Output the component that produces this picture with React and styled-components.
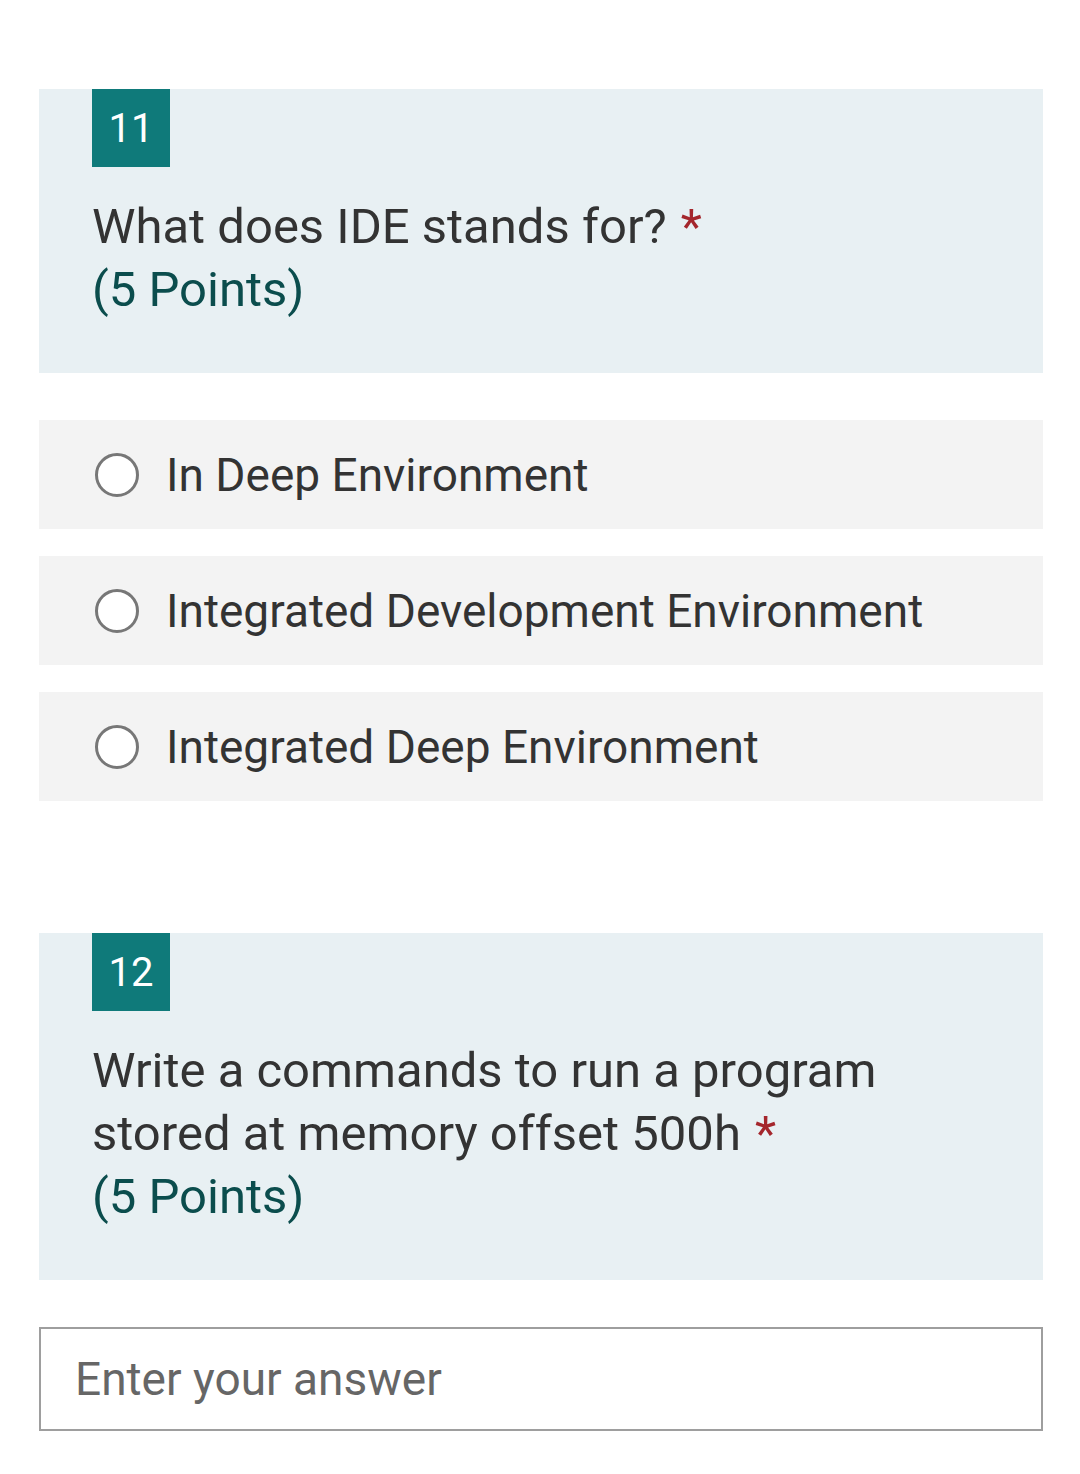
import styled, { createGlobalStyle } from 'styled-components';

const Global = createGlobalStyle`
  body{margin:0;background:#fff;font-family:Roboto,"Noto Sans",sans-serif;}
`;

const Page = styled.div`
  padding:89px 37px 40px 39px;
  display:flex;flex-direction:column;
`;

const QuestionBox = styled.div`
  background:#e8f0f3;
  padding:0 40px 52px 53px;
  margin-top:${p=>p.$top||0}px;
`;
const Badge = styled.div`
  width:78px;height:78px;background:#0f7a7a;color:#fff;
  display:flex;align-items:center;justify-content:center;
  font-size:40px;
`;
const QText = styled.div`
  margin-top:28px;font-size:49px;line-height:63px;color:#333;
`;
const Star = styled.span`
  color:#a4262c;margin-left:14px;
`;
const Points = styled.div`
  color:#0b4d4d;
`;

const Options = styled.div`
  display:flex;flex-direction:column;gap:27px;margin-top:47px;
`;
const Option = styled.label`
  height:109px;background:#f3f3f3;
  display:flex;align-items:center;padding-left:56px;
  font-size:46px;color:#333;
`;
const Radio = styled.span`
  width:38px;height:38px;border:3px solid #777;border-radius:50%;
  background:#fff;margin-right:27px;flex-shrink:0;
`;

const Input = styled.div`
  margin-top:47px;height:100px;border:2px solid #9e9e9e;
  display:flex;align-items:center;padding-left:34px;
  font-size:46px;color:#666;
`;

const opts = ['In Deep Environment','Integrated Development Environment','Integrated Deep Environment'];

export default function App(){
  return (
    <Page>
      <Global/>
      <QuestionBox>
        <Badge>11</Badge>
        <QText>
          What does IDE stands for?<Star>*</Star>
          <Points>(5 Points)</Points>
        </QText>
      </QuestionBox>
      <Options>
        {opts.map(o=>(
          <Option key={o}><Radio/>{o}</Option>
        ))}
      </Options>
      <QuestionBox $top={132}>
        <Badge>12</Badge>
        <QText>
          Write a commands to run a program<br/>
          stored at memory offset 500h<Star>*</Star>
          <Points>(5 Points)</Points>
        </QText>
      </QuestionBox>
      <Input>Enter your answer</Input>
    </Page>
  );
}
